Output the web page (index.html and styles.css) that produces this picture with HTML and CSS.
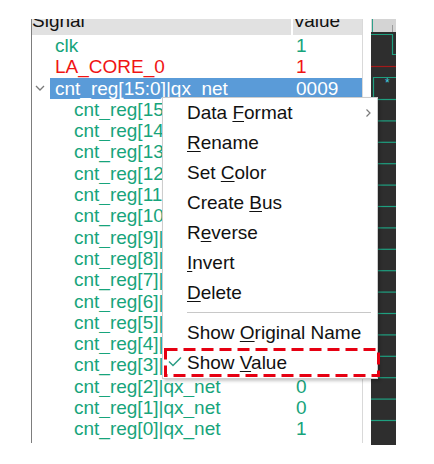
FILE: index.html
```html
<!DOCTYPE html>
<html lang="en">
<head>
  <meta charset="UTF-8" />
  <meta name="viewport" content="width=device-width, initial-scale=1.0"/>
  <title>Signal list - context menu</title>
  <link rel="stylesheet" href="styles.css">
</head>
<body>
  <div class="app">
    <div class="signals">
      <div class="head">
        <div class="h-name"><span>Signal</span></div>
        <div class="h-val"><span>Value</span></div>
      </div>

      <div class="rows">
        <div class="row"><span class="twist"></span><div class="cell"><span class="name">clk</span><span class="val">1</span></div></div>
        <div class="row red"><span class="twist"></span><div class="cell"><span class="name">LA_CORE_0</span><span class="val">1</span></div></div>
        <div class="row sel">
          <span class="twist">
            <svg width="18" height="21" viewBox="0 0 18 21"><polyline points="4,8 8,12 12,8" fill="none" stroke="#7a7a7a" stroke-width="1.3"/></svg>
          </span>
          <div class="cell"><span class="name">cnt_reg[15:0]|qx_net</span><span class="val">0009</span></div>
        </div>
        <div class="row child"><span class="twist"></span><div class="cell"><span class="name">cnt_reg[15]|qx_net</span><span class="val">0</span></div></div>
        <div class="row child"><span class="twist"></span><div class="cell"><span class="name">cnt_reg[14]|qx_net</span><span class="val">0</span></div></div>
        <div class="row child"><span class="twist"></span><div class="cell"><span class="name">cnt_reg[13]|qx_net</span><span class="val">0</span></div></div>
        <div class="row child"><span class="twist"></span><div class="cell"><span class="name">cnt_reg[12]|qx_net</span><span class="val">0</span></div></div>
        <div class="row child"><span class="twist"></span><div class="cell"><span class="name">cnt_reg[11]|qx_net</span><span class="val">0</span></div></div>
        <div class="row child"><span class="twist"></span><div class="cell"><span class="name">cnt_reg[10]|qx_net</span><span class="val">0</span></div></div>
        <div class="row child"><span class="twist"></span><div class="cell"><span class="name">cnt_reg[9]|qx_net</span><span class="val">0</span></div></div>
        <div class="row child"><span class="twist"></span><div class="cell"><span class="name">cnt_reg[8]|qx_net</span><span class="val">0</span></div></div>
        <div class="row child"><span class="twist"></span><div class="cell"><span class="name">cnt_reg[7]|qx_net</span><span class="val">0</span></div></div>
        <div class="row child"><span class="twist"></span><div class="cell"><span class="name">cnt_reg[6]|qx_net</span><span class="val">0</span></div></div>
        <div class="row child"><span class="twist"></span><div class="cell"><span class="name">cnt_reg[5]|qx_net</span><span class="val">0</span></div></div>
        <div class="row child"><span class="twist"></span><div class="cell"><span class="name">cnt_reg[4]|qx_net</span><span class="val">0</span></div></div>
        <div class="row child"><span class="twist"></span><div class="cell"><span class="name">cnt_reg[3]|qx_net</span><span class="val">1</span></div></div>
        <div class="row child"><span class="twist"></span><div class="cell"><span class="name">cnt_reg[2]|qx_net</span><span class="val">0</span></div></div>
        <div class="row child"><span class="twist"></span><div class="cell"><span class="name">cnt_reg[1]|qx_net</span><span class="val">0</span></div></div>
        <div class="row child"><span class="twist"></span><div class="cell"><span class="name">cnt_reg[0]|qx_net</span><span class="val">1</span></div></div>
      </div>
    </div>

    <!-- waveform strip -->
    <div class="wave">
      <svg width="25" height="426" viewBox="0 0 25 426">
        <rect x="0" y="0" width="25" height="426" fill="#2e2e2e"/>
        <rect x="0" y="0" width="25" height="13" fill="#d4d4d4"/>
        <line x1="1.5" y1="0" x2="1.5" y2="13" stroke="#2ea08a" stroke-width="1"/>
        <line x1="21.5" y1="6" x2="21.5" y2="13" stroke="#9c9c9c" stroke-width="1"/>
        <path d="M0 15.5 H21.5 V35.5 H25" fill="none" stroke="#1fa080" stroke-width="1.2"/>
        <path d="M0 47.5 H25" stroke="#a31a1a" stroke-width="1.2"/>
        <path d="M25 58.5 H2.5 V79" fill="none" stroke="#1fa080" stroke-width="1.2"/>
        <text x="14" y="68" fill="#3fd0e0" font-family="Liberation Sans, sans-serif" font-size="12">*</text>
        <g stroke="#1fa080" stroke-width="1.2">
          <path d="M0 80.5 H25"/><path d="M0 101.9 H25"/><path d="M0 123.3 H25"/><path d="M0 144.7 H25"/>
          <path d="M0 166.1 H25"/><path d="M0 187.5 H25"/><path d="M0 208.9 H25"/><path d="M0 230.3 H25"/>
          <path d="M0 251.7 H25"/><path d="M0 273.1 H25"/><path d="M0 294.5 H25"/><path d="M0 315.9 H25"/>
          <path d="M0 337.3 H25"/><path d="M0 358.7 H25"/><path d="M0 380.1 H25"/><path d="M0 401.5 H25"/>
        </g>
      </svg>
    </div>
  </div>

  <!-- context menu -->
  <div class="menu">
    <div class="item"><span class="ico"></span><span class="label">Data <u>F</u>ormat</span>
      <span class="sub"><svg width="7" height="10" viewBox="0 0 7 10"><polyline points="1.5,1.5 5,5 1.5,8.5" fill="none" stroke="#7a7a7a" stroke-width="1.2"/></svg></span>
    </div>
    <div class="item"><span class="ico"></span><span class="label"><u>R</u>ename</span></div>
    <div class="item"><span class="ico"></span><span class="label">Set <u>C</u>olor</span></div>
    <div class="item"><span class="ico"></span><span class="label">Create <u>B</u>us</span></div>
    <div class="item"><span class="ico"></span><span class="label">R<u>e</u>verse</span></div>
    <div class="item"><span class="ico"></span><span class="label"><u>I</u>nvert</span></div>
    <div class="item"><span class="ico"></span><span class="label"><u>D</u>elete</span></div>
    <div class="sep"></div>
    <div class="item"><span class="ico"></span><span class="label">Show <u>O</u>riginal Name</span></div>
    <div class="item"><span class="ico">
        <svg width="24" height="30" viewBox="0 0 24 30"><polyline points="6,13.5 10,17.5 18,9.5" fill="none" stroke="#2a9c84" stroke-width="1.5"/></svg>
      </span><span class="label">Show <u>V</u>alue</span></div>
  </div>

  <!-- annotation box -->
  <svg class="mark" width="216" height="29" viewBox="0 0 216 29">
    <rect x="1.5" y="1.5" width="213" height="26" fill="none" stroke="#e60012" stroke-width="3" stroke-dasharray="12 6"/>
  </svg>
</body>
</html>
```

FILE: styles.css
```css
* {
  box-sizing: border-box;
}

body {
  margin: 0;
  background: #fff;
  font-family: "Liberation Sans", Arial, sans-serif;
  font-size: 19px;
  position: relative;
  height: 464px;
  overflow: hidden;
}

.app {
  display: flex;
  align-items: flex-start;
  padding: 19px 0 0 31px;
}

.signals {
  width: 332px;
  border-left: 1px solid #7d7d7d;
  border-right: 1px solid #d9d9d9;
  padding-bottom: 3px;
}

.head {
  display: flex;
  height: 16px;
  overflow: hidden;
  color: #111;
}

.head span {
  display: block;
  line-height: 16px;
  margin-top: -6px;
}

.h-name {
  width: 259px;
  background: #e1e1e1;
  margin-right: 2px;
}

.h-val {
  flex: 1;
  background: #e1e1e1;
}

.row {
  display: flex;
  height: 21.3px;
  line-height: 21.3px;
  color: #17a47b;
  white-space: nowrap;
}

.row.red {
  color: #f01414;
}

.twist {
  width: 18px;
  display: flex;
}

.cell {
  flex: 1;
  display: flex;
}

.name {
  width: 243px;
  padding-left: 5px;
  overflow: hidden;
}

.child .name {
  padding-left: 24px;
}

.val {
  padding-left: 3px;
}

.sel .cell {
  background: #5a9bd8;
  color: #fff;
}

.wave {
  margin-left: 8px;
  height: 426px;
}

.wave svg {
  display: block;
}

.menu {
  position: absolute;
  left: 162px;
  top: 97px;
  width: 216px;
  background: #fff;
  border: 1px solid #cdcdcd;
  box-shadow: 2px 2px 3px rgba(0, 0, 0, 0.22);
  color: #111;
}

.item {
  display: flex;
  align-items: center;
  height: 30px;
  line-height: 30px;
  white-space: nowrap;
}

.ico {
  width: 24px;
  height: 30px;
  display: flex;
}

.label u {
  text-decoration-thickness: 1px;
  text-underline-offset: 2px;
}

.sub {
  margin-left: auto;
  margin-right: 5px;
  display: flex;
}

.sep {
  height: 10px;
  margin: 0 6px 0 24px;
  padding-top: 4px;
}

.sep::before {
  content: "";
  display: block;
  border-top: 1px solid #c8c8c8;
}

.mark {
  position: absolute;
  left: 164px;
  top: 348px;
}
```
